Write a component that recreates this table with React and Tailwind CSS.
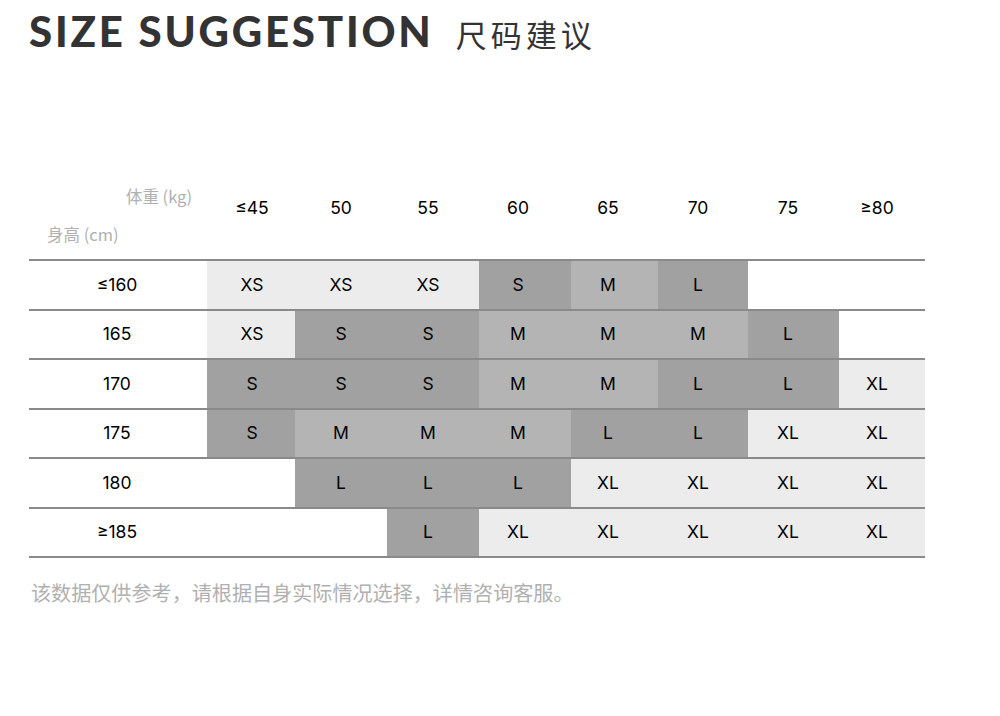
// Size suggestion chart
const COLS = [
  { w: 'w-[88px]', pad: 'pl-[2px]' },
  { w: 'w-[92px]', pad: '' },
  { w: 'w-[92px]', pad: 'pr-[10px]' },
  { w: 'w-[92px]', pad: 'pr-[14px]' },
  { w: 'w-[87px]', pad: 'pr-[13px]' },
  { w: 'w-[90px]', pad: 'pr-[10px]' },
  { w: 'w-[91px]', pad: 'pr-[11px]' },
  { w: 'w-[86px]', pad: 'pr-[10px]' },
]

const WEIGHTS = ['≤45', '50', '55', '60', '65', '70', '75', '≥80']

const TONE = {
  l: 'bg-[#ececec]',
  m: 'bg-[#b4b4b4]',
  d: 'bg-[#a1a1a1]',
  e: 'bg-white',
}

// [size, tone]
const ROWS = [
  { h: '≤160', cells: [['XS', 'l'], ['XS', 'l'], ['XS', 'l'], ['S', 'd'], ['M', 'm'], ['L', 'd'], ['', 'e'], ['', 'e']] },
  { h: '165', cells: [['XS', 'l'], ['S', 'd'], ['S', 'd'], ['M', 'm'], ['M', 'm'], ['M', 'm'], ['L', 'd'], ['', 'e']] },
  { h: '170', cells: [['S', 'd'], ['S', 'd'], ['S', 'd'], ['M', 'm'], ['M', 'm'], ['L', 'd'], ['L', 'd'], ['XL', 'l']] },
  { h: '175', cells: [['S', 'd'], ['M', 'm'], ['M', 'm'], ['M', 'm'], ['L', 'd'], ['L', 'd'], ['XL', 'l'], ['XL', 'l']] },
  { h: '180', cells: [['', 'e'], ['L', 'd'], ['L', 'd'], ['L', 'd'], ['XL', 'l'], ['XL', 'l'], ['XL', 'l'], ['XL', 'l']] },
  { h: '≥185', cells: [['', 'e'], ['', 'e'], ['L', 'd'], ['XL', 'l'], ['XL', 'l'], ['XL', 'l'], ['XL', 'l'], ['XL', 'l']] },
]

function Row({ row, last }) {
  return (
    <div className={[
      'flex border-t-2 border-[#8a8a8a]',
      last ? 'border-b-2 h-[51.5px]' : 'h-[49.5px]',
    ].join(' ')}>
      <div className="w-[178px] flex items-center justify-center pr-[2px]">{row.h}</div>
      {row.cells.map(([size, tone], i) => (
        <div
          key={i}
          className={['flex items-center justify-center', COLS[i].w, COLS[i].pad, TONE[tone]].join(' ')}
        >{size}</div>
      ))}
    </div>
  )
}

export default function App() {
  return (
    <div className="w-[1000px] h-[716px] bg-white overflow-hidden">
      <div className="flex items-baseline pl-[29px] pt-[10px]">
        <h1 className="font-['Lato',sans-serif] font-black text-[42px] leading-none text-[#333] tracking-[2.8px]">
          SIZE SUGGESTION
        </h1>
        <span className="ml-[22px] font-['Noto_Sans_CJK_SC',sans-serif] text-[31px] leading-none text-[#333] tracking-[4px]">
          尺码建议
        </span>
      </div>

      <div className="mt-[129px] ml-[29px] w-[896px] text-[17.5px] text-black font-['Inter','Noto_Sans_CJK_SC',sans-serif]">
        <div className="flex h-[78px]">
          <div className="w-[178px] flex flex-col text-[16.5px] leading-[22px] text-[#b0b0b0] font-['Noto_Sans_CJK_SC',sans-serif]">
            <span className="self-end pr-[15px] mt-[4px]">体重 (kg)</span>
            <span className="pl-[18px] mt-[16px]">身高 (cm)</span>
          </div>
          {WEIGHTS.map((w, i) => (
            <div key={w} className={['flex items-center justify-center pb-[24px]', COLS[i].w, COLS[i].pad].join(' ')}>
              {w}
            </div>
          ))}
        </div>
        {ROWS.map((r, i) => <Row key={r.h} row={r} last={i === ROWS.length - 1} />)}
      </div>

      <p className="mt-[20px] ml-[31px] text-[20.1px] text-[#b0b0b0] font-['Noto_Sans_CJK_SC',sans-serif]">
        该数据仅供参考，请根据自身实际情况选择，详情咨询客服。
      </p>
    </div>
  )
}
